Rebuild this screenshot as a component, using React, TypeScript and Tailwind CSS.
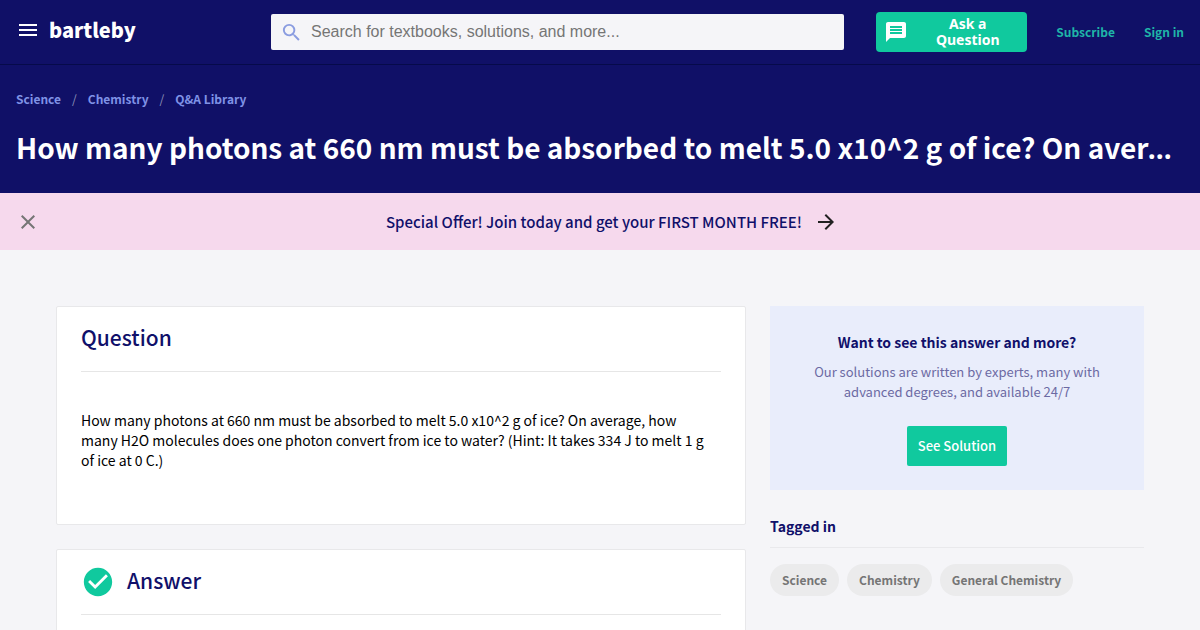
import type { ReactNode } from "react";
import {
  MdArrowForward,
  MdCheckCircle,
  MdClose,
  MdMenu,
  MdMessage,
  MdSearch,
} from "react-icons/md";

const question =
  "How many photons at 660 nm must be absorbed to melt 5.0 x10^2 g of ice? On average, how many H2O molecules does one photon convert from ice to water? (Hint: It takes 334 J to melt 1 g of ice at 0 C.)";

const crumbs = ["Science", "Chemistry", "Q&A Library"];
const tags = ["Science", "Chemistry", "General Chemistry"];

function Header() {
  return (
    <header className="flex h-[65px] items-center justify-between border-b border-[#060a4a] px-4">
      <div className="flex w-[255px] shrink-0 items-center gap-[9px] pb-1">
        <button type="button" aria-label="Menu" className="text-white">
          <MdMenu size={24} />
        </button>
        <a href="#" className="text-[20px] leading-8 font-black text-white">
          bartleby
        </a>
      </div>
      <form className="flex h-9 min-w-0 flex-1 items-center gap-2 rounded-xs bg-[#f5f5f8] pl-[9px]">
        <MdSearch size={23} className="shrink-0 text-[#8a9ce0]" />
        <input
          type="search"
          aria-label="Search"
          placeholder="Search for textbooks, solutions, and more..."
          className="h-full min-w-0 flex-1 bg-transparent font-['Liberation_Sans',Arial,sans-serif] text-base outline-none placeholder:text-[#757575]"
        />
      </form>
      <nav className="ml-8 flex shrink-0 items-center gap-[29px]">
        <button
          type="button"
          className="flex h-10 w-[151px] items-center rounded-[4px] bg-[#10c99e] px-2 text-white"
        >
          <MdMessage size={24} className="shrink-0" />
          <span className="flex-1 pr-4 pl-6 text-center font-['Noto_Sans','Open_Sans',sans-serif] text-[14px] leading-4 font-bold">
            Ask a Question
          </span>
        </button>
        <a href="#" className="text-[12px] leading-5 font-bold text-[#1fb5a8]">
          Subscribe
        </a>
        <a href="#" className="text-[12px] leading-5 font-bold text-[#1fb5a8]">
          Sign in
        </a>
      </nav>
    </header>
  );
}

function Card({ title, icon, children }: { title: string; icon?: ReactNode; children?: ReactNode }) {
  return (
    <section className="rounded-xs border border-[#e8e8ea] bg-white px-6">
      <div className="flex h-[65px] items-center gap-3 border-b border-[#e6e6e6]">
        {icon}
        <h2 className="pb-1 text-[21px] leading-8 font-medium text-[#10106a]">{title}</h2>
      </div>
      {children}
    </section>
  );
}

export default function App() {
  return (
    <div className="min-h-screen bg-[#f5f5f8] font-['Noto_Sans_CJK_SC','Noto_Sans',sans-serif]">
      <div className="bg-[#101067]">
        <Header />
        <div className="px-4 pt-6 pb-[26px]">
          <ol className="flex text-[12px] leading-5 font-bold text-[#7f92e6]">
            {crumbs.map((crumb, i) => (
              <li key={crumb} className="flex">
                {i > 0 && <span className="px-[11px] font-normal text-[#8f93b8]">/</span>}
                <a href="#">{crumb}</a>
              </li>
            ))}
          </ol>
          <h1 className="mt-[18px] h-10 truncate font-['Open_Sans',sans-serif] text-[28px] leading-10 font-bold text-white">
            <span className="font-['Noto_Sans_CJK_SC','Noto_Sans',sans-serif]">{question}</span>
          </h1>
        </div>
      </div>

      <div className="flex h-[57px] items-center bg-[#f6d9ed] px-4">
        <button type="button" aria-label="Close" className="text-[#757575]">
          <MdClose size={24} />
        </button>
        <a
          href="#"
          className="flex flex-1 items-center justify-center gap-3 text-[15px] leading-6 font-medium text-[#10106a]"
        >
          Special Offer! Join today and get your FIRST MONTH FREE!
          <MdArrowForward size={24} className="text-[#212121]" />
        </a>
      </div>

      <main className="grid grid-cols-[minmax(0,1fr)_374px] items-start gap-6 px-14 pt-14">
        <div className="flex flex-col gap-6">
          <Card title="Question">
            <p className="pt-[38px] pr-3 pb-[54px] text-[14px] leading-5 text-black">{question}</p>
          </Card>
          <Card title="Answer" icon={<MdCheckCircle size={34} className="text-[#10c99e]" />}>
            <div className="h-4" />
          </Card>
        </div>

        <aside>
          <section className="flex flex-col items-center bg-[#e9edfb] px-10 py-6 text-center">
            <h3 className="text-[14px] leading-6 font-bold text-[#10106a]">
              Want to see this answer and more?
            </h3>
            <p className="mt-2 text-[13px] leading-5 text-[#6c6aa3]">
              Our solutions are written by experts, many with advanced degrees, and available 24/7
            </p>
            <button
              type="button"
              className="mt-6 h-10 w-[100px] rounded-xs bg-[#10c99e] text-[13px] leading-5 font-medium text-white"
            >
              See Solution
            </button>
          </section>
          <h3 className="mt-6 border-b border-[#e9e9ec] pb-[9px] text-[14px] leading-6 font-bold text-[#10106a]">
            Tagged in
          </h3>
          <ul className="mt-4 flex flex-wrap gap-2">
            {tags.map((tag) => (
              <li key={tag}>
                <a
                  href="#"
                  className="block rounded-full bg-[#ebebec] px-3 py-[6px] text-[12px] leading-5 font-bold text-[#757575]"
                >
                  {tag}
                </a>
              </li>
            ))}
          </ul>
        </aside>
      </main>
    </div>
  );
}
